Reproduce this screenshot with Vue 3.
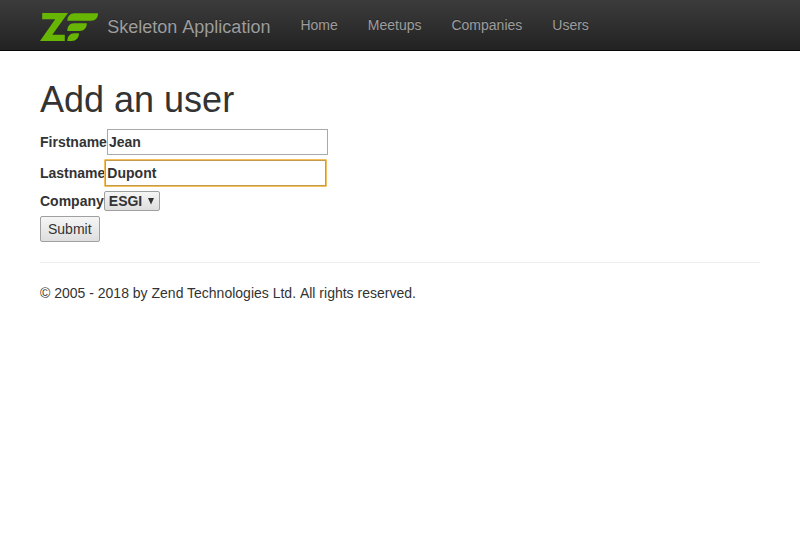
<script setup>
import { ref } from 'vue'

const links = ['Home', 'Meetups', 'Companies', 'Users']
const firstname = ref('Jean')
const lastname = ref('Dupont')
</script>

<template>
  <nav class="navbar">
    <a class="brand">
      <svg class="logo" width="58" height="28" viewBox="0 0 58 28" fill="#68b604">
        <path d="M2.2 0H28L12.3 21.7H24.8V28H0L15.2 6.3H2.2Z" />
        <path d="M34.5 .3H58C58 5 55.5 7.8 51 7.8H27.3C27.3 3.5 30 .3 34.5 .3Z" />
        <path d="M34 10.3H46.8C46.8 15 44 18 39.5 18H27.3C27.3 13.5 29.5 10.3 34 10.3Z" />
        <path d="M34.5 20.3H39C39 25 36 28 31.5 28H27.3C27.3 23.5 30 20.3 34.5 20.3Z" />
      </svg>
      <span class="title">Skeleton Application</span>
    </a>
    <div class="links">
      <a v-for="link in links" :key="link">{{ link }}</a>
    </div>
  </nav>
  <main class="container">
    <h1>Add an user</h1>
    <form @submit.prevent>
      <label class="row"><span>Firstname</span><input v-model="firstname" type="text" class="field" /></label>
      <label class="row"><span>Lastname</span><input v-model="lastname" type="text" class="field active" /></label>
      <div class="row company">
        <span>Company</span>
        <div class="select">
          <span>ESGI</span>
          <svg width="6" height="8" viewBox="0 0 6 8"><path d="M0 1H6L3 7.4Z" fill="#333" /></svg>
        </div>
      </div>
      <button class="submit">Submit</button>
    </form>
    <hr />
    <footer>© 2005 - 2018 by Zend Technologies <span class="plain">Ltd. All</span> rights reserved.</footer>
  </main>
</template>

<style>
body {
  background: #fff;
}
</style>

<style scoped>
.navbar,
.container {
  box-sizing: border-box;
  padding: 0 40px;
  font-family: "Liberation Sans", Arial, sans-serif;
  font-size: 14px;
  line-height: 20px;
  color: #333;
}
.navbar {
  display: flex;
  height: 51px;
  border-bottom: 1px solid #080808;
  background: linear-gradient(to bottom, #3c3c3c 0%, #222 100%);
  color: #9d9d9d;
  text-shadow: 0 -1px 0 rgba(0, 0, 0, 0.25);
}
.brand {
  display: flex;
  align-items: center;
  padding-top: 4px;
  height: 50px;
  box-sizing: border-box;
  font-size: 18px;
}
.logo {
  margin-right: 9.3px;
}
.title,
.plain {
  font-kerning: none;
}
.links {
  display: flex;
  gap: 30px;
  padding: 15px 0 0 30px;
}
.container {
  padding-top: 29px;
}
h1 {
  margin: 0 0 9px;
  font-size: 36px;
  font-weight: 400;
  line-height: 40px;
}
.row {
  display: flex;
  align-items: center;
  height: 26px;
  margin-bottom: 5px;
  font-weight: 700;
}
.field {
  box-sizing: border-box;
  width: 221px;
  height: 26px;
  margin: 0;
  padding: 1px;
  border: 1px solid #a9a9a9;
  border-radius: 0;
  background: #fff;
  color: #333;
  font: inherit;
  outline: none;
}
.active {
  border-color: #c49a4d;
  border-radius: 0.5px;
  box-shadow: 0 0 0 1px #f5bf5e;
}
.company {
  height: 20px;
}
.select {
  display: flex;
  align-items: center;
  justify-content: space-between;
  box-sizing: border-box;
  width: 56px;
  height: 20px;
  padding: 0 5px 0 4px;
  border: 1px solid #a0a0a0;
  border-radius: 2px;
  background: linear-gradient(#f5f5f5, #dedede);
}
.submit {
  display: block;
  box-sizing: border-box;
  width: 60px;
  height: 26px;
  padding: 0 0 0 7px;
  border: 1px solid #a0a0a0;
  border-radius: 2px;
  background: linear-gradient(#f6f6f6, #dedede);
  color: #333;
  font: inherit;
  text-align: left;
}
hr {
  height: 1px;
  margin: 20px 0;
  border: 0;
  background: #eee;
}
</style>
